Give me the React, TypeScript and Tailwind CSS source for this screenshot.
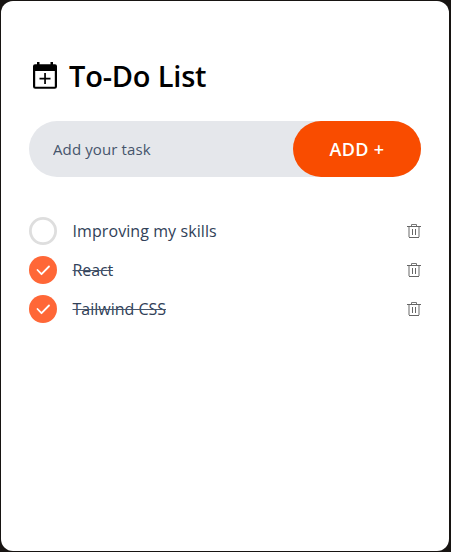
import React, { useState } from "react";

type Task = { id: number; text: string; done: boolean; tracking: string };

const initialTasks: Task[] = [
  { id: 1, text: "Improving my skills", done: false, tracking: "tracking-[0.08px]" },
  { id: 2, text: "React", done: true, tracking: "tracking-[-0.1px]" },
  { id: 3, text: "Tailwind CSS", done: true, tracking: "tracking-[-0.01px]" },
];

function CalendarIcon() {
  return (
    <svg className="h-[27px] w-6 shrink-0" viewBox="0 0 24 27" aria-hidden="true">
      <path
        fillRule="evenodd"
        d="M4 0h2.500v2.300h11V0H20v2.300h2A2 2 0 0 1 24 4.300V24.500A2.300 2.300 0 0 1 21.700 26.800H2.300A2.300 2.300 0 0 1 0 24.500V4.300A2 2 0 0 1 2 2.300H4zM2.200 9V24.700H21.800V9z"
      />
      <path d="M11.200 11h1.700v4.700h4.600v1.700h-4.600v4.700h-1.700v-4.700H6.500v-1.700h4.700z" />
    </svg>
  );
}

function Check({ done }: { done: boolean }) {
  return (
    <svg className="h-7 w-7 shrink-0" viewBox="0 0 28 28" aria-hidden="true">
      {done ? (
        <>
          <circle cx="14" cy="14" r="14" fill="#ff6737" />
          <path d="M8.500 14l4 4.200L20 10.500" fill="none" stroke="#fff" strokeWidth="1.800" strokeLinecap="round" strokeLinejoin="round" />
        </>
      ) : (
        <circle cx="14" cy="14" r="12.600" fill="#fff" stroke="#dedede" strokeWidth="2.800" />
      )}
    </svg>
  );
}

function TrashIcon() {
  return (
    <svg className="h-3.5 w-3.5" viewBox="0 0 14 14" fill="none" aria-hidden="true">
      <path d="M0 2.500h14" stroke="#666" />
      <path d="M4.500 2V.5h5V2" stroke="#777" />
      <path d="M2 3v10M12 3v10" stroke="#b5b5b5" strokeWidth="2" />
      <path d="M2 13.500h10" stroke="#666" />
      <path d="M5.500 5v6M8.500 5v6" stroke="#666" />
    </svg>
  );
}

export default function App() {
  const [tasks, setTasks] = useState(initialTasks);
  const toggle = (id: number) =>
    setTasks(tasks.map((t) => (t.id === id ? { ...t, done: !t.done } : t)));
  const remove = (id: number) => setTasks(tasks.filter((t) => t.id !== id));

  return (
    <div className="h-screen bg-[#171412] pt-px pr-0.5 pb-px pl-px font-['Open_Sans','Noto_Sans',sans-serif]">
      <main className="flex h-full flex-col rounded-xl bg-white px-7 pt-[57px]">
        <header className="flex h-9 items-center gap-2">
          <div className="flex w-8 justify-center pb-px">
            <CalendarIcon />
          </div>
          <h1 className="text-[29px] leading-9 font-semibold tracking-[-0.2px] text-black">To-Do List</h1>
        </header>

        <div className="mt-[27px] flex h-14 shrink-0 items-center rounded-full bg-gray-200">
          <input
            className="h-14 min-w-0 flex-1 bg-transparent pl-6 text-[15px] tracking-[0.11px] text-slate-600 outline-none placeholder:text-slate-600"
            type="text"
            placeholder="Add your task"
          />
          <button className="h-14 w-32 rounded-full bg-[#f94c00] text-lg font-semibold tracking-[0.3px] text-white">ADD +</button>
        </div>

        <ul className="mt-10 flex flex-col gap-[11px]">
          {tasks.map((t) => (
            <li key={t.id} className="flex h-7 items-center">
              <button className="flex flex-1 items-center" onClick={() => toggle(t.id)}>
                <Check done={t.done} />
                <span className={`ml-[15.500px] text-base text-slate-700 ${t.tracking} ${t.done ? "line-through decoration-slate-600 decoration-1" : ""}`}>
                  {t.text}
                </span>
              </button>
              <button aria-label="Delete task" onClick={() => remove(t.id)}>
                <TrashIcon />
              </button>
            </li>
          ))}
        </ul>
      </main>
    </div>
  );
}
